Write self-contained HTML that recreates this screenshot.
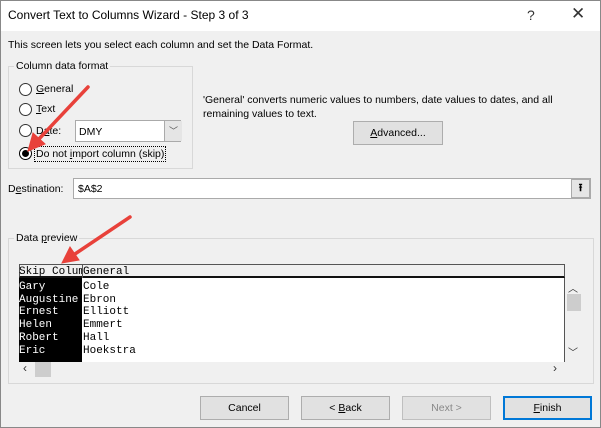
<!DOCTYPE html>
<html><head><style>
body{margin:0;width:601px;height:428px;overflow:hidden;background:#f0f0f0;font-family:"Liberation Sans",sans-serif;font-size:10.5px;color:#000;position:relative}
.a{position:absolute;white-space:nowrap}
.btn{position:absolute;background:#e1e1e1;border:1px solid #adadad;box-sizing:border-box;text-align:center;line-height:22px;font-size:10.5px}
.rad{position:absolute;width:13px;height:13px;border:1px solid #333;border-radius:50%;background:#fff;box-sizing:border-box}
.mono{font-family:"Liberation Mono",monospace;font-size:11px;line-height:12.7px}
</style></head><body>
<div class="a" style="left:0;top:0;width:599px;height:30px;background:#fff;border:1px solid #888;border-bottom:none"></div>
<div class="a" style="left:0;top:0;width:599px;height:426px;border:1px solid #888"></div>
<div class="a" style="left:8px;top:8px;font-size:12px">Convert Text to Columns Wizard - Step 3 of 3</div>
<div class="a" style="left:527px;top:7px;font-size:14px;color:#333">?</div>
<div class="a" style="left:571px;top:4px;font-size:17px;color:#333">✕</div>
<div class="a" style="left:8px;top:39px">This screen lets you select each column and set the Data Format.</div>
<div class="a" style="left:8px;top:66px;width:183px;height:101px;border:1px solid #d8d8d8"></div>
<div class="a" style="left:14px;top:60px;background:#f0f0f0;padding:0 2px">Column data format</div>
<div class="rad" style="left:19px;top:83px"></div><div class="a" style="left:36px;top:83px"><u>G</u>eneral</div>
<div class="rad" style="left:19px;top:103px"></div><div class="a" style="left:36px;top:103px"><u>T</u>ext</div>
<div class="rad" style="left:19px;top:124px"></div><div class="a" style="left:36px;top:125px">D<u>a</u>te:</div>
<div class="rad" style="left:19px;top:147px;border-color:#000"><div style="position:absolute;left:2px;top:2px;width:7px;height:7px;border-radius:50%;background:#000"></div></div>
<div class="a" style="left:34px;top:146px;border:1px dotted #000;padding:0 1px;line-height:14px">Do not <u>i</u>mport column (skip)</div>
<div class="a" style="left:75px;top:120px;width:106px;height:22px;background:#fff;border:1px solid #aaa;box-sizing:border-box"></div>
<div class="a" style="left:79px;top:126px">DMY</div>
<div class="a" style="left:164px;top:121px;width:17px;height:20px;background:#e5e5e5;border-left:1px solid #aaa;text-align:center;font-size:9px;line-height:20px;color:#555">﹀</div>
<div class="a" style="left:203px;top:93px;line-height:14px">'General' converts numeric values to numbers, date values to dates, and all<br>remaining values to text.</div>
<div class="btn" style="left:353px;top:121px;width:90px;height:24px"><u>A</u>dvanced...</div>
<div class="a" style="left:8px;top:183px">D<u>e</u>stination:</div>
<div class="a" style="left:73px;top:178px;width:518px;height:21px;background:#fff;border:1px solid #aaa;box-sizing:border-box"></div>
<div class="a" style="left:78px;top:183px">$A$2</div>
<div class="a" style="left:571px;top:179px;width:19px;height:19px;background:#e5e5e5;border:1px solid #aaa;box-sizing:border-box;text-align:center;font-size:11px;line-height:17px;font-weight:bold">⭱</div>
<div class="a" style="left:8px;top:238px;width:584px;height:144px;border:1px solid #d8d8d8"></div>
<div class="a" style="left:14px;top:232px;background:#f0f0f0;padding:0 2px">Data <u>p</u>review</div>
<div class="a" style="left:19px;top:264px;width:546px;height:98px;background:#fff;border-left:1px solid #555;border-right:1px solid #555;box-sizing:border-box"></div>
<div class="a" style="left:19px;top:264px;width:546px;height:14px;background:#f0f0f0;border:1px solid #555;border-bottom:2px solid #111;box-sizing:border-box"></div>
<div class="a" style="left:82px;top:264px;width:1px;height:14px;background:#555"></div>
<div class="a" style="left:19px;top:278px;width:63px;height:84px;background:#000"></div>
<div class="a mono" style="left:19px;top:266px;width:63px;overflow:hidden">Skip Column</div>
<div class="a mono" style="left:83px;top:266px">General</div>
<div class="a mono" style="left:19px;top:281px;color:#fff">Gary<br>Augustine<br>Ernest<br>Helen<br>Robert<br>Eric</div>
<div class="a mono" style="left:83px;top:281px">Cole<br>Ebron<br>Elliott<br>Emmert<br>Hall<br>Hoekstra</div>
<div class="a" style="left:568px;top:280px;font-size:10px;color:#333">︿</div>
<div class="a" style="left:567px;top:294px;width:14px;height:17px;background:#cdcdcd"></div>
<div class="a" style="left:568px;top:344px;font-size:10px;color:#333">﹀</div>
<div class="a" style="left:23px;top:361px;font-size:12px;color:#333">‹</div>
<div class="a" style="left:35px;top:362px;width:16px;height:15px;background:#cdcdcd"></div>
<div class="a" style="left:553px;top:361px;font-size:12px;color:#333">›</div>
<div class="btn" style="left:200px;top:396px;width:89px;height:24px">Cancel</div>
<div class="btn" style="left:301px;top:396px;width:89px;height:24px">&lt; <u>B</u>ack</div>
<div class="btn" style="left:402px;top:396px;width:89px;height:24px;color:#888;border-color:#bfbfbf">Next &gt;</div>
<div class="btn" style="left:503px;top:396px;width:89px;height:24px;border:2px solid #0078d7;line-height:20px"><u>F</u>inish</div>
<svg class="a" style="left:0;top:0" width="601" height="428">
<g stroke="#e8413a" stroke-width="3.5" fill="#e8413a" stroke-linecap="round">
<line x1="88" y1="87" x2="38" y2="140"/>
<polygon points="28,151 33,133 45,144" stroke-width="1"/>
<line x1="130" y1="217" x2="72" y2="256"/>
<polygon points="62,263 70,247 79,260" stroke-width="1"/>
</g></svg>
</body></html>
